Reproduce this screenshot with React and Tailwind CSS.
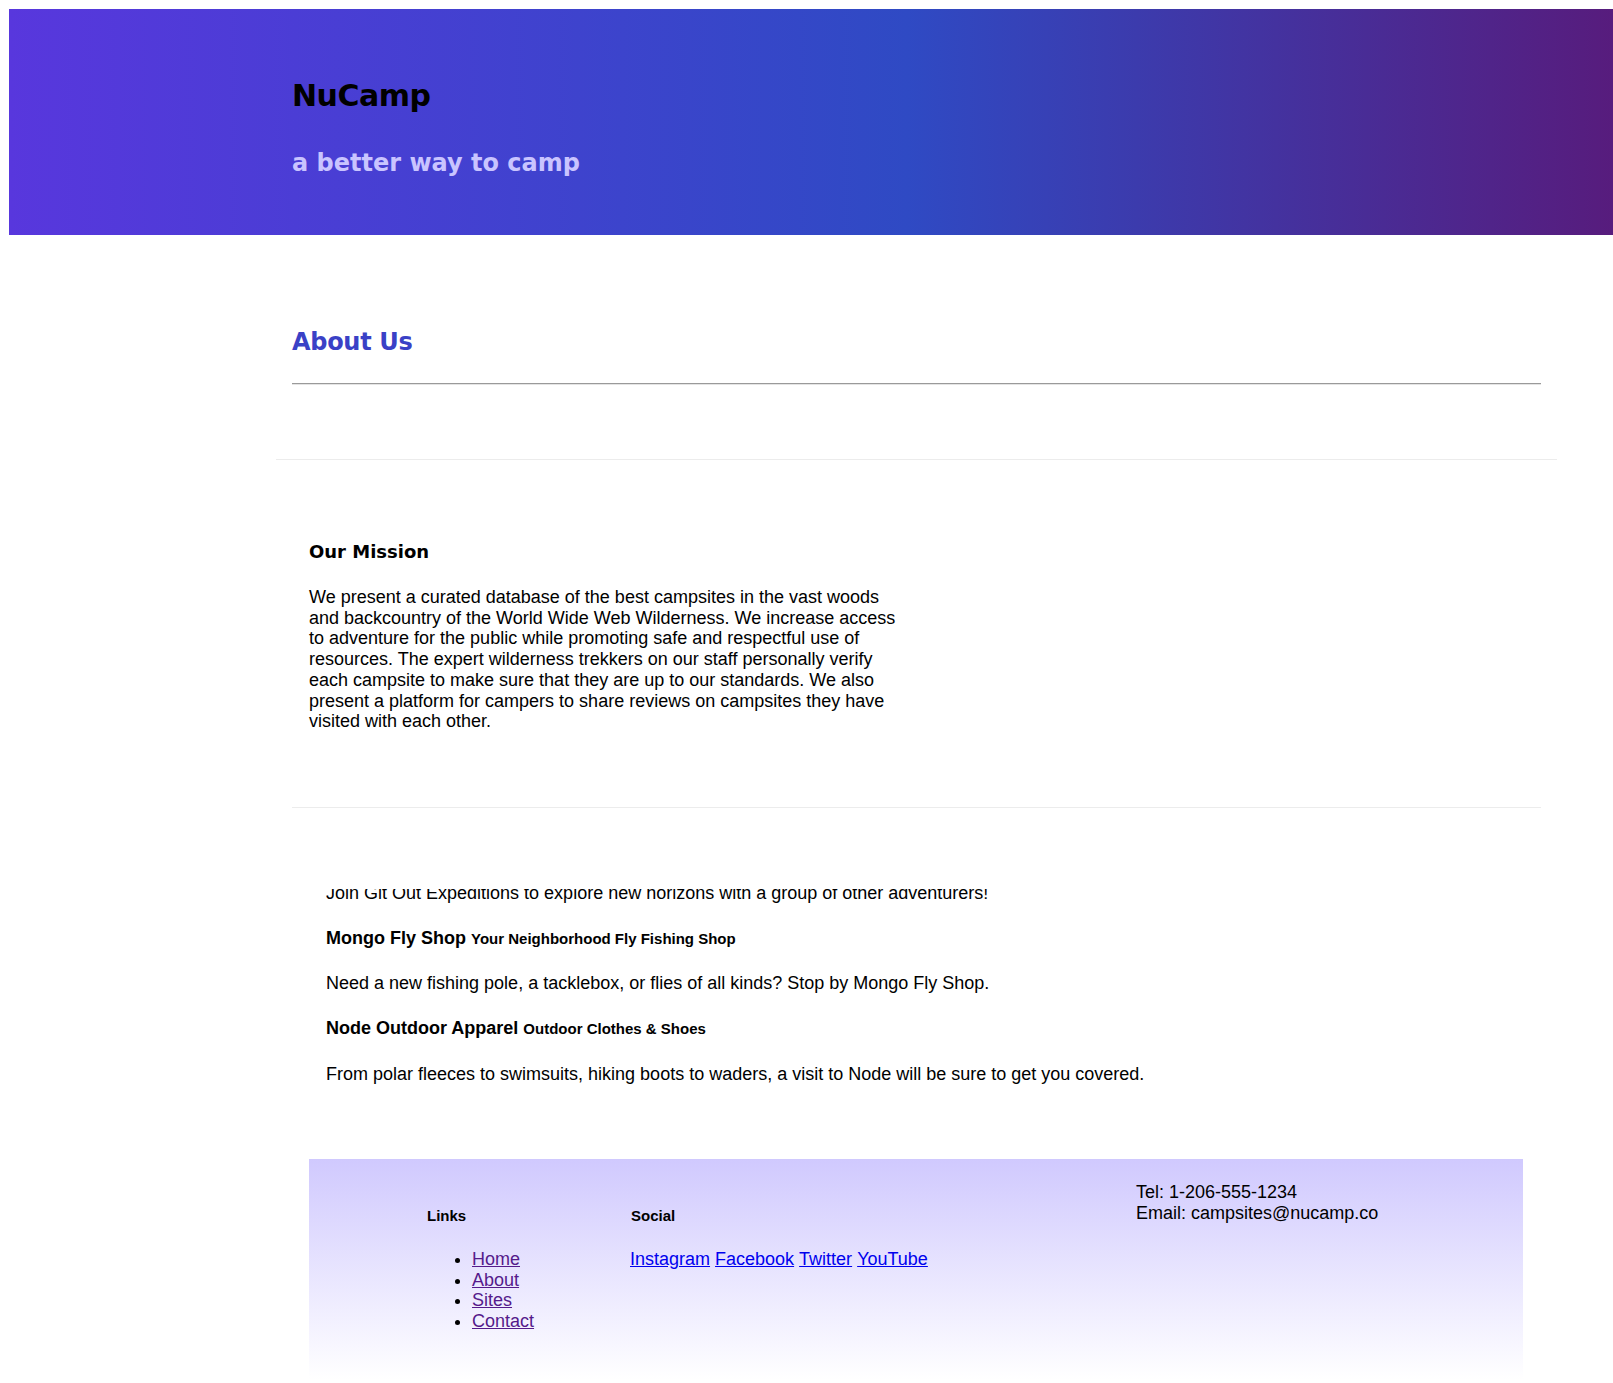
import React from 'react';

const comic = "font-['Comic_Sans_MS','DejaVu_Sans',sans-serif]";

const partners = [
  { name: 'Mongo Fly Shop', tag: 'Your Neighborhood Fly Fishing Shop', desc: 'Need a new fishing pole, a tacklebox, or flies of all kinds? Stop by Mongo Fly Shop.' },
  { name: 'Node Outdoor Apparel', tag: 'Outdoor Clothes & Shoes', desc: 'From polar fleeces to swimsuits, hiking boots to waders, a visit to Node will be sure to get you covered.' },
];

export default function App() {
  return (
    <div className="min-h-screen bg-white font-['Liberation_Sans',Arial,sans-serif] text-[18px] leading-[20.7px] text-black pt-[9px] overflow-hidden">
      {/* Jumbotron */}
      <header className="ml-[9px] h-[226px] bg-[linear-gradient(to_right,#5837dd,#2f4ac4_56%,#571c7d)] pl-[283px] pt-[69px]">
        <h1 className={`${comic} text-[30px] leading-[36px] font-bold tracking-[-0.5px] text-black`}>NuCamp</h1>
        <h2 className={`${comic} mt-[34px] text-[24px] leading-[30px] font-bold text-[#c9c4ff]`}>a better way to camp</h2>
      </header>

      <main className="ml-[276px] mr-[56px]">
        <div className="px-4 pt-[92px]">
          <h2 className={`${comic} text-[24px] leading-[30px] font-bold tracking-[-0.3px] text-[#3a41c6]`}>About Us</h2>
          <hr className="mt-[26px] h-[2px] border-0 border-t border-t-[#9a9a9a] border-b border-b-[#e4e4e4]" />
        </div>
        <hr className="mt-[74px] border-0 border-t border-t-[#ececec]" />

        <section className="pl-[33px] pt-[81px]">
          <h3 className={`${comic} text-[18px] leading-[22px] font-bold`}>Our Mission</h3>
          <p className="mt-[24px] w-[598px]">
            We present a curated database of the best campsites in the vast woods and backcountry of the World Wide Web Wilderness. We increase access to adventure for the public while promoting safe and respectful use of resources. The expert wilderness trekkers on our staff personally verify each campsite to make sure that they are up to our standards. We also present a platform for campers to share reviews on campsites they have visited with each other.
          </p>
        </section>

        <div className="px-4">
          <hr className="mt-[75px] border-0 border-t border-t-[#ececec]" />
        </div>

        <section className="mt-[81px] h-[270px] overflow-hidden pl-[50px]">
          <p className="-mt-[6px]">Join Git Out Expeditions to explore new horizons with a group of other adventurers!</p>
          {partners.map((p) => (
            <div key={p.name}>
              <p className="mt-6 font-bold">
                {p.name} <span className="text-[15px]">{p.tag}</span>
              </p>
              <p className="mt-6">{p.desc}</p>
            </div>
          ))}
        </section>
      </main>

      {/* Footer */}
      <footer className="ml-[309px] mr-[90px] h-[260px] bg-[linear-gradient(to_bottom,#d0c9fe,#ffffff_85%)] flex items-start">
        <div className="ml-[118px] w-[204px] pt-[49px]">
          <h5 className="text-[15px] leading-[16px] font-bold">Links</h5>
          <ul className="mt-[25px] list-disc pl-[45px] marker:text-black">
            {['Home', 'About', 'Sites', 'Contact'].map((l) => (
              <li key={l}>
                <a href="#" className="text-[#551a8b] underline">{l}</a>
              </li>
            ))}
          </ul>
        </div>
        <div className="w-[505px] pt-[49px]">
          <h5 className="text-[15px] leading-[16px] font-bold">Social</h5>
          <div className="mt-[25px] -ml-[1px] flex gap-[5px]">
            {['Instagram', 'Facebook', 'Twitter', 'YouTube'].map((s) => (
              <a key={s} href="#" className="text-[#0000ee] underline">{s}</a>
            ))}
          </div>
        </div>
        <div className="pt-[23px]">
          <div>Tel: 1-206-555-1234</div>
          <div>Email: campsites@nucamp.co</div>
        </div>
      </footer>
    </div>
  );
}
